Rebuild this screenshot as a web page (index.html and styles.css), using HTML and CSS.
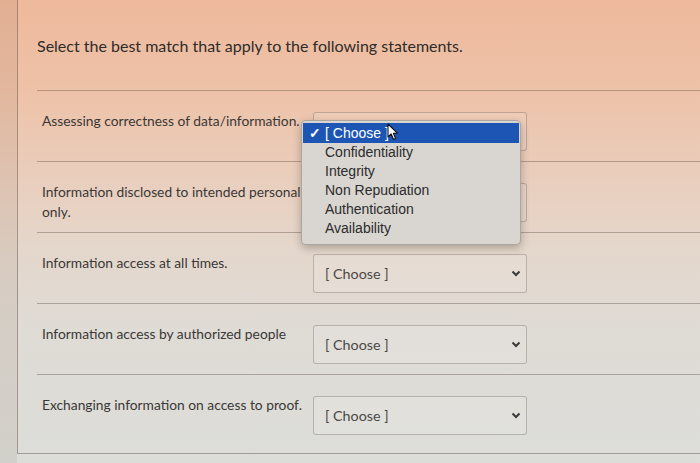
FILE: index.html
```html
<!DOCTYPE html>
<html lang="en">
<head>
    <meta charset="UTF-8">
    <title>Matching question</title>
    <link rel="stylesheet" href="styles.css">
</head>
<body>
    <div class="edge"></div>
    <div class="page">
        <h1 class="title">Select the best match that apply to the following statements.</h1>

        <div class="row">
            <div class="label">Assessing correctness of data/information.</div>
            <div class="pick open">
                <span>[ Choose ]</span>
                <svg class="chev" width="10" height="7" viewBox="0 0 10 7"><path d="M1.5 1.5 L5 5 L8.5 1.5" fill="none" stroke="#3a3a3a" stroke-width="2"/></svg>
                <ul class="menu">
                    <li class="sel"><span class="tick">&#10003;</span>[ Choose ]</li>
                    <li>Confidentiality</li>
                    <li>Integrity</li>
                    <li>Non Repudiation</li>
                    <li>Authentication</li>
                    <li>Availability</li>
                </ul>
                <svg class="cursor" width="12" height="18" viewBox="0 0 12 18"><path d="M1 1 L1 14 L4.2 11 L6.5 16.5 L8.6 15.6 L6.4 10.3 L10.6 10.3 Z" fill="#fff" stroke="#111" stroke-width="1.1" stroke-linejoin="round"/></svg>
            </div>
        </div>

        <div class="row">
            <div class="label">Information disclosed to intended personal only.</div>
            <div class="pick">
                <span>[ Choose ]</span>
                <svg class="chev" width="10" height="7" viewBox="0 0 10 7"><path d="M1.5 1.5 L5 5 L8.5 1.5" fill="none" stroke="#3a3a3a" stroke-width="2"/></svg>
            </div>
        </div>

        <div class="row">
            <div class="label">Information access at all times.</div>
            <div class="pick">
                <span>[ Choose ]</span>
                <svg class="chev" width="10" height="7" viewBox="0 0 10 7"><path d="M1.5 1.5 L5 5 L8.5 1.5" fill="none" stroke="#3a3a3a" stroke-width="2"/></svg>
            </div>
        </div>

        <div class="row">
            <div class="label">Information access by authorized people</div>
            <div class="pick">
                <span>[ Choose ]</span>
                <svg class="chev" width="10" height="7" viewBox="0 0 10 7"><path d="M1.5 1.5 L5 5 L8.5 1.5" fill="none" stroke="#3a3a3a" stroke-width="2"/></svg>
            </div>
        </div>

        <div class="row">
            <div class="label">Exchanging information on access to proof.</div>
            <div class="pick">
                <span>[ Choose ]</span>
                <svg class="chev" width="10" height="7" viewBox="0 0 10 7"><path d="M1.5 1.5 L5 5 L8.5 1.5" fill="none" stroke="#3a3a3a" stroke-width="2"/></svg>
            </div>
        </div>
    </div>
</body>
</html>
```

FILE: styles.css
```css
body{
    margin: 0;
    height: 463px;
    overflow: hidden;
    display: flex;
    font-family: Lato, "Open Sans", sans-serif;
    color: #363432;
    background: linear-gradient(to bottom, #eeb99c 0, #eec2a8 90px, #eacdbb 170px, #e4d7cc 250px, #dfdbd5 330px, #dcddd9 463px);
}
.edge{
    width: 17px;
    flex-shrink: 0;
    background: rgba(110, 80, 60, 0.09);
}
.page{
    flex: 1;
    height: 454px;
    box-sizing: border-box;
    border-left: 1px solid rgba(90, 70, 60, 0.45);
    border-bottom: 1px solid rgba(90, 80, 70, 0.45);
    padding: 36px 0 0 19px;
}
.title{
    margin: 0 0 34px 0;
    font-size: 16px;
    font-weight: 400;
    line-height: 20px;
    color: #2e2c2a;
}
.row{
    display: flex;
    border-top: 1px solid rgba(90, 70, 60, 0.38);
    padding: 21px 0 10px 5px;
    height: 39px;
}
.label{
    width: 268px;
    margin-top: -1px;
    font-size: 13.8px;
    line-height: 20px;
    color: #3a3836;
}
.pick{
    position: relative;
    margin-left: 3px;
    width: 214px;
    height: 39px;
    box-sizing: border-box;
    border: 1px solid rgba(90, 80, 70, 0.32);
    border-radius: 3px;
    background: rgba(255, 255, 255, 0.12);
    display: flex;
    align-items: center;
    justify-content: space-between;
    padding: 0 5px 0 11px;
    font-size: 14.3px;
    color: #4a4846;
}
.open{
    z-index: 2;
}
.menu{
    position: absolute;
    left: -13px;
    top: 7px;
    width: 220px;
    height: 125px;
    box-sizing: border-box;
    margin: 0;
    padding: 2px 0 0 0;
    list-style: none;
    background: #d9d5d1;
    border: 1px solid rgba(90, 80, 70, 0.35);
    border-radius: 5px;
    box-shadow: 0 3px 9px rgba(40, 30, 20, 0.3);
    font-family: "Liberation Sans", Arial, sans-serif;
    font-size: 14px;
    color: #2c2c2c;
}
.menu li{
    height: 19px;
    line-height: 19px;
    padding-left: 23px;
}
.menu .sel{
    height: 20px;
    line-height: 20px;
    margin: 0 1px 0 1px;
    background: #1d55b4;
    color: #fff;
    padding-left: 22px;
    position: relative;
}
.tick{
    position: absolute;
    left: 6px;
    font-size: 14px;
    font-weight: bold;
}
.cursor{
    position: absolute;
    left: 73px;
    top: 10px;
}
```
